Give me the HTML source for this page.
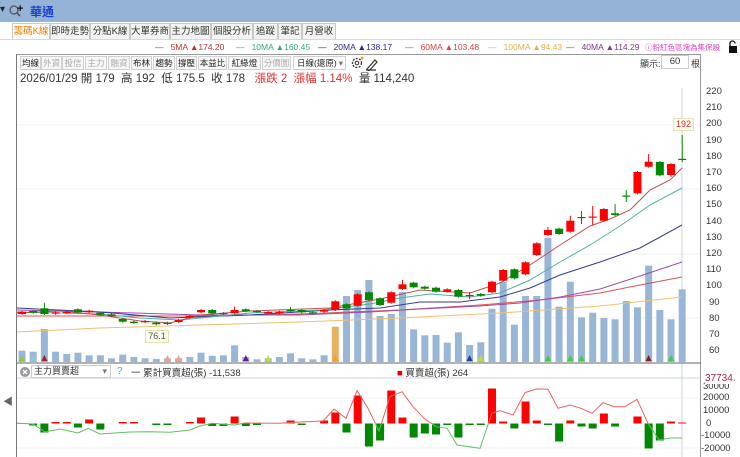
<!DOCTYPE html>
<html><head><meta charset="utf-8">
<style>
*{margin:0;padding:0;box-sizing:border-box}
body{width:740px;height:457px;overflow:hidden;background:#fff;font-family:"Liberation Sans","Noto Sans CJK TC",sans-serif;position:relative;color:#333}
.a{position:absolute;white-space:nowrap}
.top{left:0;top:0;width:740px;height:22px;background:#95b3d7}
.tab{position:absolute;top:23px;height:17px;border:1px solid #c8c8c8;border-bottom:none;background:#f3f3f3;font-size:9.5px;line-height:16px;text-align:center;color:#333;white-space:nowrap;overflow:hidden}
.leg{top:42px;font-size:8.5px}
.btn{position:absolute;top:56px;height:14px;border:1px solid #d0d0d0;background:#f7f7f7;font-size:8.5px;line-height:12px;text-align:center;color:#222;white-space:nowrap;overflow:hidden}
.dis{color:#aaa}
.ax{font-size:9.5px;color:#333}
</style></head><body>
<div class="a top"></div>
<div class="a" style="left:0;top:4px;font-size:10px;color:#222">▾</div>
<svg class="a" style="left:8px;top:4px" width="14" height="14"><circle cx="6" cy="6" r="4" fill="none" stroke="#555" stroke-width="1.3"/><line x1="9" y1="9" x2="12" y2="12" stroke="#555" stroke-width="1.6"/></svg>
<div class="a" style="left:17px;top:3px;font-size:11px;font-weight:bold;color:#111">+</div>
<div class="a" style="left:30px;top:3px;font-size:12px;font-weight:bold;color:#1a3fd0">華通</div>

<div class="tab" style="left:12px;width:38px;color:#f07c00;background:#fff">籌碼K線</div>
<div class="tab" style="left:50px;width:40px">即時走勢</div>
<div class="tab" style="left:90px;width:40px">分點K線</div>
<div class="tab" style="left:130px;width:40px">大單券商</div>
<div class="tab" style="left:170px;width:41px">主力地圖</div>
<div class="tab" style="left:211px;width:42px">個股分析</div>
<div class="tab" style="left:253px;width:25px">追蹤</div>
<div class="tab" style="left:278px;width:24px">筆記</div>
<div class="tab" style="left:302px;width:34px">月營收</div>
<div class="a" style="left:0;top:39px;width:740px;height:1px;background:#d8d8d8"></div>

<div class="a leg" style="left:155px;color:#c03030">—&nbsp;&nbsp;&nbsp;5MA ▲174.20</div>
<div class="a leg" style="left:236px;color:#3aa38a">—&nbsp;&nbsp;&nbsp;10MA ▲160.45</div>
<div class="a leg" style="left:318px;color:#2a2a8a">—&nbsp;&nbsp;&nbsp;20MA ▲138.17</div>
<div class="a leg" style="left:405px;color:#e04040">—&nbsp;&nbsp;&nbsp;60MA ▲103.48</div>
<div class="a leg" style="left:488px;color:#e8b040">—&nbsp;&nbsp;&nbsp;100MA ▲94.43</div>
<div class="a leg" style="left:566px;color:#7a3a8a">—&nbsp;&nbsp;&nbsp;40MA ▲114.29</div>
<div class="a" style="left:645px;top:42px;font-size:7.5px;color:#e040c0">ⓘ粉紅色區塊為集保股</div>
<svg class="a" style="left:727px;top:40px" width="12" height="14"><path d="M3 6V3.5a2.5 2.5 0 0 1 5 0" fill="none" stroke="#111" stroke-width="1.3"/><rect x="2" y="6" width="8" height="7" fill="#111"/></svg>

<div class="a" style="left:16px;top:54px;width:685px;height:403px;border-left:1px solid #777;border-top:1px solid #999;border-right:1px solid #999"></div>

<div class="btn" style="left:20px;width:21px">均線</div>
<div class="btn dis" style="left:41px;width:21px">外資</div>
<div class="btn dis" style="left:62px;width:22px">投信</div>
<div class="btn dis" style="left:85px;width:22px">主力</div>
<div class="btn dis" style="left:108px;width:22px">融資</div>
<div class="btn" style="left:131px;width:21px">布林</div>
<div class="btn" style="left:153px;width:22px">趨勢</div>
<div class="btn" style="left:176px;width:21px">撐壓</div>
<div class="btn" style="left:198px;width:29px">本益比</div>
<div class="btn" style="left:228px;width:33px">紅綠燈</div>
<div class="btn dis" style="left:262px;width:29px">分價圖</div>
<div class="btn" style="left:293px;width:53px;text-align:left;padding-left:3px;background:#fff">日線(還原)<span style="position:absolute;right:2px;color:#777">▾</span></div>
<svg class="a" style="left:350px;top:56px" width="30" height="15"><circle cx="7" cy="7" r="4.5" fill="none" stroke="#333" stroke-width="1.3" stroke-dasharray="2 1.3"/><circle cx="7" cy="7" r="1.8" fill="none" stroke="#333"/><circle cx="12" cy="2" r="1.5" fill="#f0a030"/><path d="M17 13l8-9 2 2-8 9z M16 14h10" fill="none" stroke="#333" stroke-width="1.2"/></svg>
<div class="a" style="left:640px;top:57px;font-size:9px">顯示:</div>
<div class="a" style="left:661px;top:55px;width:28px;height:14px;border:1px solid #ccc;font-size:9.5px;text-align:center;line-height:12px">60</div>
<div class="a" style="left:691px;top:57px;font-size:9px">根</div>

<div class="a" style="left:20px;top:70px;font-size:11.5px;color:#333">2026/01/29 開 179&nbsp; 高 192&nbsp; 低 175.5&nbsp; 收 178&nbsp;&nbsp; <span style="color:#e03030">漲跌 2&nbsp; 漲幅 1.14%</span>&nbsp; 量 114,240</div>

<div class="a" style="left:3px;top:393px;font-size:10px;color:#666">◀</div>

<svg class="a" id="ch" style="left:0;top:0" width="740" height="457"></svg>

<div class="a ax" style="left:706px;top:86px">220</div>
<div class="a ax" style="left:706px;top:102px">210</div>
<div class="a ax" style="left:706px;top:118px">200</div>
<div class="a ax" style="left:706px;top:135px">190</div>
<div class="a ax" style="left:706px;top:151px">180</div>
<div class="a ax" style="left:706px;top:167px">170</div>
<div class="a ax" style="left:706px;top:183px">160</div>
<div class="a ax" style="left:706px;top:199px">150</div>
<div class="a ax" style="left:706px;top:216px">140</div>
<div class="a ax" style="left:706px;top:232px">130</div>
<div class="a ax" style="left:706px;top:248px">120</div>
<div class="a ax" style="left:706px;top:264px">110</div>
<div class="a ax" style="left:706px;top:280px">100</div>
<div class="a ax" style="left:709px;top:297px">90</div>
<div class="a ax" style="left:709px;top:313px">80</div>
<div class="a ax" style="left:709px;top:329px">70</div>
<div class="a ax" style="left:709px;top:345px">60</div>
<div class="a" style="left:673px;top:118px;width:21px;height:13px;border:1px solid #e8e0b0;background:#fffdf0;font-size:9px;color:#d03030;text-align:center;line-height:11px">192</div>
<div class="a" style="left:145px;top:330px;width:24px;height:13px;border:1px solid #e8e0b0;background:#fffdf0;font-size:9px;color:#555;text-align:center;line-height:11px">76.1</div>

<svg class="a" style="left:19px;top:366px" width="12" height="12"><circle cx="6" cy="6" r="5" fill="#999"/><path d="M4 4l4 4M8 4l-4 4" stroke="#fff" stroke-width="1.3"/></svg>
<div class="a" style="left:31px;top:365px;width:80px;height:13px;border:1px solid #ccc;font-size:9px;line-height:11px;padding-left:2px">主力買賣超<span style="position:absolute;right:3px;color:#777">▾</span></div>
<div class="a" style="left:117px;top:366px;font-size:10px;color:#5b9bd5">?</div>
<div class="a" style="left:131px;top:365px;font-size:9.5px;color:#333">一 累計買賣超(張) -11,538</div>
<div class="a" style="left:397px;top:365px;font-size:9.5px;color:#333"><span style="color:#e00">■</span> 買賣超(張) 264</div>
<div class="a ax" style="left:703px;top:392px">20000</div>
<div class="a ax" style="left:703px;top:405px">10000</div>
<div class="a ax" style="left:706px;top:418px">0</div>
<div class="a ax" style="left:701px;top:430px">-10000</div>
<div class="a ax" style="left:701px;top:443px">-20000</div>
<div class="a ax" style="left:703px;top:381px;background:#fff">30000</div>
<div class="a" style="left:705px;top:373px;font-size:10px;color:#b02040;background:#fff">37734.</div>

<script>
var s=document.getElementById('ch'),h='';
function X(i){return 22+11.19*i}
[125,189,254,318].forEach(function(y){h+='<line x1="17" x2="700" y1="'+y+'" y2="'+y+'" stroke="#f2f2f2"/>'});
h+='<line x1="682" x2="682" y1="88" y2="457" stroke="#c8d0e6"/>';
var v=[350.7,351.7,329,351.7,354,352.7,355.3,355.3,358.3,354.7,357,358.3,359,358.3,358.3,357,352.7,355.7,355.3,345.3,357,359.3,358.3,357,353.3,358.3,359.3,355.3,326.7,296,290,280,316,314,292,329.3,335.3,335,342.7,332.3,345,342.3,308.7,282,324.7,296,296,237.7,306.7,281.7,317.3,312.7,318,319.3,301,307.3,265.7,310,319.3,289.3];
v.forEach(function(t,i){h+='<rect x="'+(X(i)-3.5)+'" y="'+t+'" width="7" height="'+(362-t)+'" fill="'+(i==28?'#e8b060':'#9ab6d6')+'"/>'});
var tr={0:'#8c4',1:'#8cd',2:'#a02030',13:'#f0a090',14:'#f0a090',20:'#602090',22:'#bd4',28:'#f0a030',40:'#2040a0',41:'#bd4',47:'#4c4',49:'#4c4',50:'#4c4',56:'#802030',58:'#4c4'};
for(var k in tr){var x=X(+k);h+='<path d="M'+(x-3)+' 361L'+x+' 355L'+(x+3)+' 361z" fill="'+tr[k]+'"/>'}
function pl(p,c,w){h+='<polyline points="'+p+'" fill="none" stroke="'+c+'" stroke-width="'+(w||1)+'"/>'}
pl('17,332 100,328 200,325 300,322 400,318 500,313 600,306 682,297','#f0c070');
pl('17,316 100,316 200,316 300,314 400,310 480,305 540,300 600,293 640,285 682,277','#e05050');
pl('17,310 100,312 200,315 300,315 370,312 420,309 480,306 520,303 560,297 600,289 640,276 682,262','#9a50a8');
pl('17,308 100,312 170,318 250,315 330,310 380,308 420,302 460,302 500,297 530,288 560,275 600,262 640,248 682,225','#3a3a9a');
pl('17,312 100,314 140,318 180,320 250,313 320,310 370,304 400,298 430,294 470,297 500,293 530,280 560,262 590,245 620,226 650,205 682,188','#50b0a0');
pl('17,313 60,311 100,315 140,321 170,323 200,315 250,311 330,308 380,299 420,290 470,293 500,283 530,265 560,245 590,226 610,219 630,210 650,190 670,180 682,168','#c05050');
var c=[[311.7,314,'r'],[311,312.7,'g'],[308.3,314,'g',302.7],[312.3,313.7,'r'],[312,313,'r'],[309.3,312.3,'g'],[310.7,312.3,'r'],[312.7,314.7,'g'],[314.3,316,'g'],[319,321.7,'g'],[321.7,323,'g'],[321,322,'r'],[322.7,324.3,'g'],[322.7,324,'g'],[320,322,'r'],[315.7,317.7,'r'],[310,312.3,'r'],[310,313.3,'g'],[313,314,'g'],[310,313.3,'r',306.7],[309.3,311.3,'g'],[311,312,'g'],[312,313.3,'r'],[311.7,313.3,'r'],[310,310.8,'g',307],[310,312.3,'g'],[312.3,313,'g'],[310,311.7,'r'],[301.3,310,'r'],[304.3,308.3,'g'],[294.3,305.7,'r'],[292.3,300,'g'],
[298.3,305,'g'],[292.3,302.7,'r'],[284.3,289,'r',280],[282.7,287.3,'g'],[286.7,288.7,'g'],[287.7,291.7,'g'],[289.3,291.7,'r'],[290,296.7,'g'],[295,296,'r',292,299],[294,295.7,'g'],[281.7,292.3,'r'],[270,280.7,'r'],[269.3,278.3,'g'],[262.3,274.3,'r'],[243.3,255,'r'],[230,235,'r',227],[228.7,234,'g'],[220.7,231.7,'r',216],[217,218,'g',211,224],[216.5,217.5,'r',206,225],[209,220.7,'r'],[213.3,215,'g',204],[195.5,196.5,'g',190,202],[172,193.3,'r'],[161.7,166.7,'r',154],[162,175.3,'g'],[164,175,'r',163,177],[158.8,160,'g',135,162]];
c.forEach(function(d,i){var x=X(i),col=d[2]=='r'?'#f00':'#080';
 var wt=d[3]||d[0]-1,wb=d[4]||d[1]+1;
 h+='<line x1="'+x+'" x2="'+x+'" y1="'+wt+'" y2="'+wb+'" stroke="'+col+'"/>';
 h+='<rect x="'+(x-4)+'" y="'+d[0]+'" width="8" height="'+Math.max(1.2,d[1]-d[0])+'" fill="'+col+'"/>'});
h+='<line x1="17" x2="701" y1="363" y2="363" stroke="#666"/>';
h+='<line x1="17" x2="700" y1="378" y2="378" stroke="#c8d0e8"/>';
h+='<line x1="17" x2="700" y1="398" y2="398" stroke="#f0f0f0"/><line x1="17" x2="700" y1="448" y2="448" stroke="#f0f0f0"/>';
var b={1:2,2:9,3:-1.5,4:-1.5,5:4,6:-4,7:6,9:-1.5,10:-1.5,12:1.5,13:1.5,15:-1.5,16:-6,17:2.5,18:2.5,19:-7,20:2.5,21:1.5,24:-3,25:1.5,27:-3,28:-11,29:9,30:-28,31:23,32:17,33:-33,34:-6,35:14,36:10,37:11,38:1.5,39:14,40:1.5,41:1.5,42:-35,43:-2,44:5,45:-22,46:-3,47:1.5,48:18,49:-3,50:3,51:5,52:-10,53:3,55:-7,56:25,57:17,58:-2,59:-1};
for(var k in b){var x=X(+k),val=b[k],y0=423.5;
 h+='<rect x="'+(x-4)+'" y="'+(val<0?y0+val:y0)+'" width="8" height="'+Math.abs(val)+'" fill="'+(val<0?'#f00':'#080')+'"/>'}
var lp='17,423.3 33,424 45,432 60,429 78,433 88,428.3 100,434 130,432 150,431.7 170,432.3 190,430 200,426 212,423.3 235,425 245,423 280,423.3 300,422 323,421 334,409 346,418.3 357,390.7 368,408.3 379,431 390,396.7 402,391.7 413,406.7 424,418.3 436,426.7 447,428.3 457,445 480,448.3 492,413 500,410.7 513,415 525,392.7 536,389 548,389.3 558,408.3 570,405 581,408.3 592,413.3 603,402.7 614,406.7 625,406.7 637,399.3 648,423.3 659,440 670,438 682,438';
h+='<defs><clipPath id="ab"><rect x="0" y="360" width="740" height="63.5"/></clipPath><clipPath id="be"><rect x="0" y="423.5" width="740" height="40"/></clipPath></defs>';
h+='<polyline clip-path="url(#ab)" points="'+lp+'" fill="none" stroke="#f06060"/>';
h+='<polyline clip-path="url(#be)" points="'+lp+'" fill="none" stroke="#60c060"/>';
s.innerHTML=h;
</script>
</body></html>
